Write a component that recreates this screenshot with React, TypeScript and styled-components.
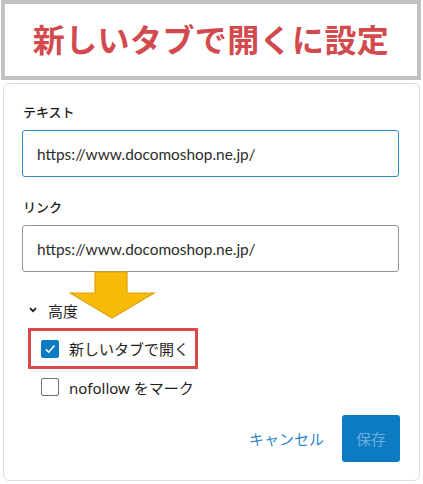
import React from "react";
import styled, { createGlobalStyle } from "styled-components";

const GlobalStyle = createGlobalStyle`
  html, body {
    margin: 0;
    padding: 0;
    background: #ffffff;
  }
  body {
    font-family: "Noto Sans", "Noto Sans CJK JP", sans-serif;
    color: #1e1e1e;
  }
`;

const Page = styled.div`
  width: 423px;
  height: 484px;
  box-sizing: border-box;
  padding: 0 2px 0 1px;
  position: relative;
  overflow: hidden;
`;

const Banner = styled.div`
  height: 80px;
  box-sizing: border-box;
  border: 4px solid #c2c2c2;
  display: flex;
  align-items: center;
  justify-content: center;
  padding-bottom: 4px;
`;

const Title = styled.h1`
  margin: 0;
  font-family: "Noto Sans CJK JP", sans-serif;
  font-size: 32px;
  font-weight: 700;
  letter-spacing: 0.4px;
  color: #d24a4d;
`;

const Panel = styled.div`
  margin: 3px 1px 0 2px;
  height: 398px;
  box-sizing: border-box;
  border: 1px solid #dcdcdc;
  border-radius: 6px;
  padding: 19px 18px 18px 18px;
  display: flex;
  flex-direction: column;
`;

const Label = styled.label<{ $gap?: number }>`
  display: block;
  margin-top: ${(p) => p.$gap ?? 0}px;
  margin-left: 1px;
  font-family: "Noto Sans CJK JP", sans-serif;
  font-size: 13px;
  font-weight: 500;
  line-height: 18px;
  color: #1e1e1e;
`;

const Input = styled.input<{ $focused?: boolean }>`
  margin-top: 9px;
  height: 47px;
  width: 377px;
  box-sizing: border-box;
  border: ${(p) => (p.$focused ? "1.5px solid #3288c1" : "1px solid #949494")};
  border-radius: 3px;
  padding: 0 14px;
  font-family: Lato, "Noto Sans", "Noto Sans CJK JP", sans-serif;
  font-size: 15.4px;
  color: #2c2c2c;
  background: #fff;
  outline: none;
`;

const Toggle = styled.div`
  margin-top: 27px;
  margin-left: 7px;
  height: 22px;
  display: flex;
  align-items: center;
  gap: 11px;
  font-family: "Noto Sans CJK JP", sans-serif;
  font-size: 15px;
  color: #1e1e1e;
`;

const Highlight = styled.div`
  margin-top: 7px;
  margin-left: 6px;
  align-self: flex-start;
  height: 41px;
  box-sizing: border-box;
  border: 3px solid #d9494c;
  padding: 0 6px 0 10px;
  display: flex;
  align-items: center;
`;

const CheckRow = styled.div<{ $indent?: number; $gap?: number }>`
  margin-top: ${(p) => p.$gap ?? 0}px;
  margin-left: ${(p) => p.$indent ?? 0}px;
  height: 22px;
  display: flex;
  align-items: center;
  gap: 10px;
  font-family: "Noto Sans", "Noto Sans CJK JP", sans-serif;
  font-size: 15px;
  color: #1e1e1e;
`;

const Box = styled.span<{ $checked?: boolean }>`
  width: 18px;
  height: 18px;
  box-sizing: border-box;
  border-radius: 2px;
  border: ${(p) => (p.$checked ? "none" : "1.5px solid #6f6f6f")};
  background: ${(p) => (p.$checked ? "#0d7bc2" : "#fff")};
  display: flex;
  align-items: center;
  justify-content: center;
`;

const Footer = styled.div`
  margin-top: 17px;
  margin-right: 1px;
  display: flex;
  justify-content: flex-end;
  align-items: center;
  gap: 18px;
`;

const CancelButton = styled.button`
  border: none;
  background: none;
  padding: 0;
  font-family: "Noto Sans CJK JP", sans-serif;
  font-size: 15px;
  color: #2f89c5;
  cursor: pointer;
`;

const SaveButton = styled.button`
  width: 58px;
  height: 47px;
  border: none;
  border-radius: 3px;
  background: #0c7bc1;
  font-family: "Noto Sans CJK JP", sans-serif;
  font-size: 15px;
  color: #6aaedc;
`;

const Arrow = styled.svg`
  position: absolute;
  left: 69px;
  top: 271px;
`;

export default function App() {
  return (
    <>
      <GlobalStyle />
      <Page>
        <Banner>
          <Title>新しいタブで開くに設定</Title>
        </Banner>
        <Panel>
          <Label>テキスト</Label>
          <Input $focused readOnly value="https://www.docomoshop.ne.jp/" />
          <Label $gap={21}>リンク</Label>
          <Input readOnly value="https://www.docomoshop.ne.jp/" />
          <Toggle>
            <svg width="8" height="6" viewBox="0 0 8 6">
              <path d="M1 1.2 L4 4.2 L7 1.2" fill="none" stroke="#1e1e1e" strokeWidth="1.8" />
            </svg>
            高度
          </Toggle>
          <Highlight>
            <CheckRow>
              <Box $checked>
                <svg width="14" height="14" viewBox="0 0 14 14">
                  <path d="M2.8 7.4 L5.8 10.2 L11.4 3.6" fill="none" stroke="#fff" strokeWidth="1.5" />
                </svg>
              </Box>
              新しいタブで開く
            </CheckRow>
          </Highlight>
          <CheckRow $indent={19} $gap={7}>
            <Box />
            nofollow をマーク
          </CheckRow>
          <Footer>
            <CancelButton>キャンセル</CancelButton>
            <SaveButton>保存</SaveButton>
          </Footer>
        </Panel>
        <Arrow width="88" height="50" viewBox="0 0 88 50">
          <path
            d="M26 1 L58 1 L58 22 L85 22 L43 47 L1 22 L26 22 Z"
            fill="#f8bb0a"
            stroke="#dca10a"
            strokeWidth="1.2"
          />
        </Arrow>
      </Page>
    </>
  );
}
